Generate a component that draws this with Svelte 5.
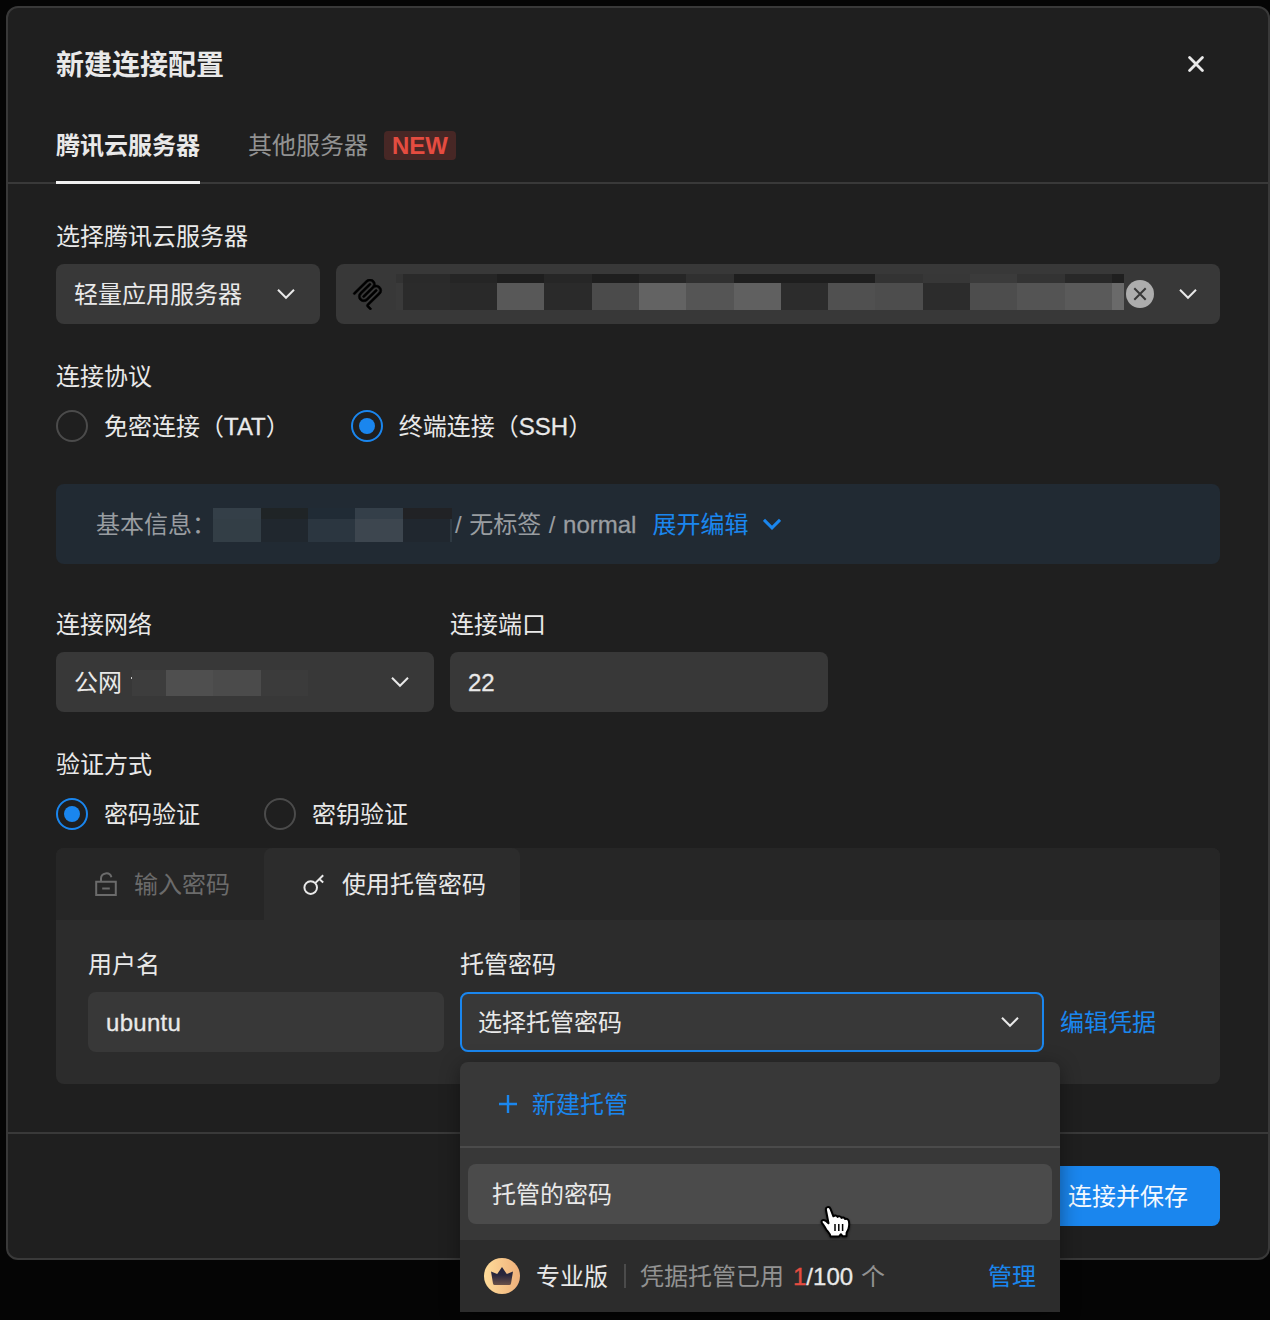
<script>
	let protocol = "ssh";
	let auth = "password";
	let port = "22";
	let username = "ubuntu";

	// each cell: width, upper colour, lower colour
	const serverMask = [
		[7, "#333333", "#3a3a3a"],
		[47, "#2a2a2a", "#2b2b2b"],
		[47, "#252525", "#292929"],
		[47, "#1e1e1e", "#585858"],
		[48, "#262626", "#2a2a2a"],
		[47, "#1e1e1e", "#4b4b4b"],
		[47, "#262626", "#636363"],
		[48, "#303030", "#555555"],
		[47, "#1e1e1e", "#606060"],
		[47, "#1e1e1e", "#2c2c2c"],
		[47, "#1e1e1e", "#505050"],
		[48, "#333333", "#4d4d4d"],
		[47, "#373737", "#2c2c2c"],
		[47, "#3b3b3b", "#4d4d4d"],
		[48, "#333333", "#545454"],
		[47, "#282828", "#5a5a5a"],
		[12, "#1f1f1f", "#6a6a6a"],
	];
	const infoMask = [
		[48, "#343f48", "#333e46"],
		[47, "#1f2426", "#20272e"],
		[47, "#202b35", "#2b3640"],
		[48, "#343f49", "#3d464f"],
		[47, "#212225", "#20272f"],
		[2, "#212225", "#2f3a43"],
	];
	const ipMask = [
		[34, "#3d3d3d"],
		[47, "#4f4f4f"],
		[48, "#4b4b4b"],
		[47, "#3b3b3b"],
	];
</script>

<style>
	:global(body) {
		background: #050505;
	}
	main {
		position: relative;
		box-sizing: border-box;
		height: 1320px;
		padding: 6px 0 0 6px;
		font-family: "Liberation Sans", "Noto Sans CJK SC", sans-serif;
		font-size: 24px;
		line-height: 30px;
		color: #e9e9e9;
		white-space: nowrap;
	}
	.dialog {
		box-sizing: border-box;
		width: 1264px;
		height: 1254px;
		border: 2px solid #393939;
		border-radius: 12px;
		background: #1f1f1f;
	}
	svg {
		display: block;
		flex: none;
		fill: none;
		stroke: currentColor;
		stroke-width: 2;
	}
	header {
		display: flex;
		align-items: center;
		justify-content: space-between;
		padding: 36px 64px 0 48px;
		height: 40px;
	}
	h1 {
		margin: 0;
		padding-top: 3px;
		font-size: 28px;
		line-height: 40px;
	}
	.tabs {
		display: flex;
		gap: 48px;
		height: 74px;
		margin-top: 24px;
		padding-left: 48px;
		border-bottom: 2px solid #393939;
	}
	.tab {
		box-sizing: border-box;
		display: flex;
		align-items: center;
		gap: 16px;
		height: 76px;
		color: #929292;
	}
	.tab.active {
		color: #e9e9e9;
		font-weight: bold;
		border-bottom: 3px solid #f0f0f0;
		padding-top: 3px;
	}
	.new {
		width: 72px;
		height: 29px;
		margin-top: -2px;
		border-radius: 4px;
		background: #472725;
		color: #e54c40;
		font-weight: bold;
		line-height: 29px;
		text-align: center;
	}
	.body {
		display: flex;
		flex-direction: column;
		padding: 38px 48px 48px;
	}
	.label {
		height: 30px;
		margin-bottom: 12px;
	}
	.row {
		display: flex;
		gap: 16px;
	}
	.field {
		box-sizing: border-box;
		display: flex;
		align-items: center;
		justify-content: space-between;
		height: 60px;
		padding: 2px 25px 0 18px;
		border: 0;
		border-radius: 8px;
		background: #383838;
		color: inherit;
		font: inherit;
		letter-spacing: 0;
		outline: none;
	}
	.field svg {
		margin-top: -2px;
	}
	.type {
		width: 264px;
	}
	.server {
		width: 884px;
		padding: 0 0 0 16px;
		justify-content: flex-start;
	}
	.server svg {
		margin-top: 0;
	}
	.mask {
		display: flex;
		flex: none;
	}
	.cell i {
		display: block;
	}
	.server .mask {
		margin: 0 2px 4px 13px;
	}
	.server .cell i {
		height: 9px;
	}
	.server .cell i + i {
		height: 27px;
	}
	.server .clear {
		margin-right: 25px;
	}
	.radios {
		display: flex;
		gap: 61px;
		margin-top: 6px;
	}
	.radio {
		display: flex;
		align-items: center;
		gap: 16px;
		height: 32px;
	}
	.text {
		padding-top: 2px;
	}
	.dot {
		box-sizing: border-box;
		display: flex;
		align-items: center;
		justify-content: center;
		width: 32px;
		height: 32px;
		border: 2px solid #4b4b4b;
		border-radius: 50%;
	}
	.dot.on {
		border-color: #1a86ee;
	}
	.dot.on::after {
		content: "";
		width: 16px;
		height: 16px;
		border-radius: 50%;
		background: #1a86ee;
	}
	.latin {
		-webkit-text-stroke: 0.3px currentColor;
	}
	.banner {
		display: flex;
		align-items: center;
		height: 80px;
		margin: 42px 0 46px;
		padding-left: 40px;
		border-radius: 8px;
		background: #212a33;
		color: #999da1;
	}
	.banner .mask {
		margin: 2px 3px 0 -3px;
	}
	.banner .cell i {
		height: 11px;
	}
	.banner .cell i + i {
		height: 23px;
	}
	.spec {
		word-spacing: 0.9px;
	}
	.link {
		color: #1a86ee;
	}
	.banner .link {
		display: flex;
		align-items: center;
		gap: 15px;
		margin-left: 16px;
	}
	.half {
		width: 378px;
	}
	.ip {
		display: flex;
		align-items: center;
	}
	.ip .cell i {
		height: 26px;
	}
	.tick {
		width: 1px;
		height: 2px;
		margin: -10px 0 0 9px;
		background: #c8c8c8;
	}
	.panel {
		height: 236px;
		margin-top: 18px;
		border-radius: 8px;
		background: #2c2c2c;
	}
	.panelTabs {
		display: flex;
		height: 72px;
		border-radius: 8px 8px 0 0;
		background: #262626;
		color: #6b6b6b;
	}
	.panelTab {
		display: flex;
		align-items: center;
		gap: 16px;
		padding: 0 34px 0 38px;
	}
	.panelTab.active {
		border-radius: 8px 8px 0 0;
		background: #2c2c2c;
		color: #e9e9e9;
	}
	.panelBody {
		display: flex;
		align-items: flex-end;
		gap: 16px;
		padding: 30px 32px 0;
	}
	.user {
		width: 356px;
		letter-spacing: 0.3px;
	}
	.select {
		position: relative;
	}
	.focused {
		width: 584px;
		border: 2px solid #1a86ee;
		padding: 2px 23px 0 16px;
	}
	.panelBody > .link {
		height: 60px;
		line-height: 62px;
	}
	.menu {
		position: absolute;
		z-index: 1;
		top: 112px;
		left: 0;
		width: 600px;
		border-radius: 8px 8px 0 0;
		background: #383838;
		box-shadow: 0 4px 20px rgba(0, 0, 0, 0.4);
	}
	.create {
		display: flex;
		align-items: center;
		gap: 15px;
		height: 84px;
		padding-left: 39px;
		border-bottom: 2px solid #4b4b4b;
	}
	.option {
		height: 60px;
		margin: 16px 8px;
		padding-left: 24px;
		border-radius: 8px;
		background: #4b4b4b;
		line-height: 62px;
	}
	.plan {
		display: flex;
		align-items: center;
		height: 72px;
		padding: 0 24px;
		background: #2c2c2c;
	}
	.plan b {
		margin-left: 16px;
		font-weight: normal;
	}
	.divider {
		width: 2px;
		height: 24px;
		margin: 0 14px 0 16px;
		background: #4b4b4b;
	}
	.muted {
		color: #929292;
	}
	.count {
		margin: 0 8px 0 9px;
	}
	.count em {
		color: #e54c40;
		font-style: normal;
	}
	.plan .link {
		margin-left: auto;
	}
	footer {
		display: flex;
		justify-content: flex-end;
		padding: 32px 48px 0 0;
		border-top: 2px solid #393939;
	}
	.save {
		width: 184px;
		height: 60px;
		padding: 2px 0 0;
		border: 0;
		border-radius: 8px;
		background: #1a86ee;
		color: #f4f9ff;
		font: inherit;
	}
	.cursor {
		position: absolute;
		z-index: 2;
		left: 819px;
		top: 1204px;
		filter: drop-shadow(0 1px 1px rgba(0, 0, 0, 0.5));
	}
</style>

{#snippet chevron(weight = 2)}
	<svg width="18" height="12" viewBox="0 0 18 12" style:stroke-width={weight}>
		<path d="M1 1.8l8 8 8-8" />
	</svg>
{/snippet}

{#snippet mosaic(cells)}
	<div class="mask">
		{#each cells as [width, ...colours]}
			<div class="cell" style="width: {width}px">
				{#each colours as colour}
					<i style="background: {colour}"></i>
				{/each}
			</div>
		{/each}
	</div>
{/snippet}

<main>
	<div class="dialog">
		<header>
			<h1>新建连接配置</h1>
			<svg width="16" height="16" viewBox="0 0 16 16" style:stroke-width="2.8">
				<path d="M1.6 1.6l12.8 12.8M14.4 1.6L1.6 14.4" stroke-linecap="round" />
			</svg>
		</header>
		<div class="tabs">
			<div class="tab active">腾讯云服务器</div>
			<div class="tab">其他服务器 <span class="new">NEW</span></div>
		</div>

		<div class="body">
			<div class="label">选择腾讯云服务器</div>
			<div class="row">
				<div class="field type">轻量应用服务器 {@render chevron()}</div>
				<div class="field server">
					<svg width="31" height="31" viewBox="0 0 24 24">
						<g fill="#000" stroke="#000" stroke-width="0.4">
							<path d="M15.688 2.343a2.588 2.588 0 00-3.61 0l-9.626 9.44a.863.863 0 01-1.203 0 .823.823 0 010-1.18l9.626-9.44a4.313 4.313 0 016.016 0 4.116 4.116 0 011.204 3.54 4.3 4.3 0 013.609 1.18l.05.05a4.115 4.115 0 010 5.9l-8.706 8.537a.274.274 0 000 .393l1.788 1.754a.823.823 0 010 1.18.863.863 0 01-1.203 0l-1.788-1.753a1.92 1.92 0 010-2.754l8.706-8.538a2.47 2.47 0 000-3.54l-.05-.049a2.588 2.588 0 00-3.607-.003l-7.172 7.034-.002.002-.098.097a.863.863 0 01-1.204 0 .823.823 0 010-1.18l7.273-7.133a2.47 2.47 0 00-.003-3.537z" />
							<path d="M14.485 4.703a.823.823 0 000-1.18.863.863 0 00-1.204 0l-7.119 6.982a4.115 4.115 0 000 5.9 4.314 4.314 0 006.016 0l7.12-6.982a.823.823 0 000-1.18.863.863 0 00-1.204 0l-7.119 6.982a2.588 2.588 0 01-3.61 0 2.47 2.47 0 010-3.54l7.12-6.982z" />
						</g>
					</svg>
					{@render mosaic(serverMask)}
					<svg class="clear" width="28" height="28" viewBox="0 0 28 28">
						<circle cx="14" cy="14" r="14" fill="#adadad" stroke="none" />
						<path d="M8.3 8.3l11.4 11.4M19.7 8.3L8.3 19.7" stroke="#383838" />
					</svg>
					{@render chevron()}
				</div>
			</div>

			<div class="label" style:margin-top="38px">连接协议</div>
			<div class="radios">
				<div class="radio">
					<span class="dot" class:on={protocol === "tat"}></span>
					<span class="text">免密连接（<span class="latin">TAT</span>）</span>
				</div>
				<div class="radio">
					<span class="dot" class:on={protocol === "ssh"}></span>
					<span class="text">终端连接（<span class="latin">SSH</span>）</span>
				</div>
			</div>

			<div class="banner">
				<span class="text">基本信息：</span>
				{@render mosaic(infoMask)}
				<span class="text spec">/ 无标签 / <span class="latin">normal</span></span>
				<span class="link"><span class="text">展开编辑</span> {@render chevron(3)}</span>
			</div>

			<div class="row">
				<div>
					<div class="label">连接网络</div>
					<div class="field half">
						<div class="ip">
							公网
							<span class="tick"></span>
							{@render mosaic(ipMask)}
						</div>
						{@render chevron()}
					</div>
				</div>
				<div>
					<div class="label">连接端口</div>
					<input class="field half latin" bind:value={port} />
				</div>
			</div>

			<div class="label" style:margin-top="38px">验证方式</div>
			<div class="radios" style:gap="64px">
				<div class="radio">
					<span class="dot" class:on={auth === "password"}></span>
					<span class="text">密码验证</span>
				</div>
				<div class="radio">
					<span class="dot" class:on={auth === "key"}></span>
					<span class="text">密钥验证</span>
				</div>
			</div>

			<div class="panel">
				<div class="panelTabs">
					<div class="panelTab">
						<svg width="24" height="24" viewBox="0 0 24 24">
							<path d="M2.2 9.8h19.6v13.2H2.2zM7 9.8V6.6a5.3 5.3 0 0 1 10.4-1.4M8.2 16.6h7.6" />
						</svg>
						<span class="text">输入密码</span>
					</div>
					<div class="panelTab active">
						<svg width="24" height="24" viewBox="0 0 24 24">
							<circle cx="8.7" cy="15.6" r="6.3" />
							<path d="M13.2 11.1l8-7.8M17 6.8l4.2 3.6" />
						</svg>
						<span class="text">使用托管密码</span>
					</div>
				</div>
				<div class="panelBody">
					<div>
						<div class="label">用户名</div>
						<input class="field user latin" bind:value={username} />
					</div>
					<div class="select">
						<div class="label">托管密码</div>
						<div class="field focused">选择托管密码 {@render chevron()}</div>
						<div class="menu">
							<div class="create link">
								<svg width="18" height="18" viewBox="0 0 18 18" style:stroke-width="2.4">
									<path d="M9 0v18M0 9h18" />
								</svg>
								<span class="text">新建托管</span>
							</div>
							<div class="option">托管的密码</div>
							<div class="plan">
								<svg width="36" height="36" viewBox="0 0 36 36">
									<defs>
										<linearGradient id="gold">
											<stop offset="0" stop-color="#ffdc9a" />
											<stop offset="1" stop-color="#efb07a" />
										</linearGradient>
										<linearGradient id="crown" x2="0" y2="1">
											<stop offset="0" stop-color="#24233c" />
											<stop offset="0.45" stop-color="#2a273d" />
											<stop offset="1" stop-color="#6b5148" />
										</linearGradient>
									</defs>
									<g stroke="none">
										<circle cx="18" cy="18" r="18" fill="url(#gold)" />
										<path d="M7 13.5l6.2 2.6L18 9l4.8 7.1 6.2-2.6-2 12q-.3 1.5-1.7 1.5H10.7q-1.4 0-1.7-1.5z" fill="url(#crown)" />
									</g>
								</svg>
								<b class="text">专业版</b>
								<span class="divider"></span>
								<span class="text muted">凭据托管已用</span>
								<span class="text count latin"><em>1</em>/100</span>
								<span class="text muted">个</span>
								<span class="text link">管理</span>
							</div>
						</div>
					</div>
					<span class="link">编辑凭据</span>
				</div>
			</div>
		</div>

		<footer>
			<button class="save">连接并保存</button>
		</footer>
	</div>

	<svg class="cursor" width="34" height="36" viewBox="0 0 34 36">
		<path
			d="M7 6.200C6.300 2.800 10.300 1.900 11.500 4.900l2.900 7.400c1-1.300 3.600-1.100 4.200.6 1-1 3.300-.7 3.900 1 1-.8 3-.4 3.500 1.100 1.400-.7 3.500.2 3.900 2.200.5 2.700.4 5-.4 7.600-.5 1.600-1.600 2.700-1.900 4l-.2 3.400h-4l-1.500-2-1.700 2.200H11.500c-.4-2.700-2.200-4-4.100-6.600-1.500-2.200-2.300-4.400-4.100-6.300-1-1.100-1-2.500 0-3.100 1.700-1 3.600.2 6.200 2.800z"
			fill="#fff"
			stroke="#000"
			stroke-linejoin="round" />
		<path d="M16 20v7M19.800 20v7M23.600 20v7" stroke="#000" style:stroke-width="1.5" />
	</svg>
</main>
